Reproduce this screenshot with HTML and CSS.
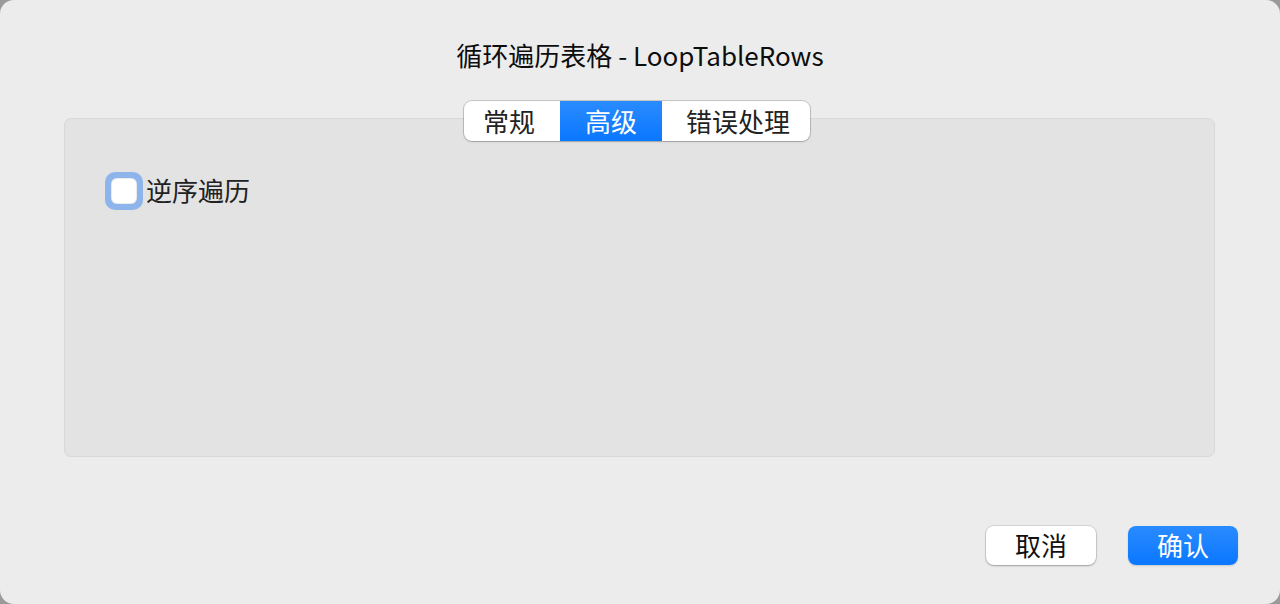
FILE: index.html
```html
<!DOCTYPE html>
<html lang="zh">
<head>
<meta charset="utf-8">
<link rel="stylesheet" href="styles.css">
</head>
<body>
<div class="window">
  <h1 class="title">循环遍历表格 - LoopTableRows</h1>
  <div class="tabs-area">
    <div class="segmented">
      <div class="seg seg-1">常规</div>
      <div class="seg seg-2 active">高级</div>
      <div class="seg seg-3">错误处理</div>
    </div>
    <div class="panel">
      <label class="check-row">
        <span class="checkbox"><span class="box"></span></span>
        <span class="check-label">逆序遍历</span>
      </label>
    </div>
  </div>
  <div class="actions">
    <button class="btn btn-cancel">取消</button>
    <button class="btn btn-ok">确认</button>
  </div>
</div>
</body>
</html>
```
FILE: styles.css
```css
html, body {
  margin: 0;
  padding: 0;
  width: 1280px;
  height: 604px;
  overflow: hidden;
  background: #9a9a9a;
}
body {
  font-family: "Noto Sans CJK SC", "Noto Sans", "Liberation Sans", sans-serif;
  color: #1d1d1d;
}
.window {
  width: 1280px;
  height: 604px;
  box-sizing: border-box;
  background: #ececec;
  border-radius: 14px;
  display: flex;
  flex-direction: column;
}
.title {
  margin: 37px 0 0 0;
  font-size: 26px;
  font-weight: 400;
  line-height: 36px;
  text-align: center;
  color: #0d0d0d;
}
.tabs-area {
  margin: 28px 65px 0 64px;
  display: flex;
  flex-direction: column;
  align-items: center;
}
.segmented {
  position: relative;
  z-index: 1;
  display: flex;
  height: 40px;
  margin-bottom: -23px;
  margin-right: 5px;
  background: #fff;
  border-radius: 8px;
  box-shadow: 0 0 0 1px rgba(0,0,0,0.16), 0 1px 2px rgba(0,0,0,0.15);
  overflow: hidden;
}
.seg {
  display: flex;
  align-items: center;
  justify-content: center;
  font-size: 26px;
  color: #222;
  line-height: 40px;
}
.seg-1 { width: 96px; padding-right: 6px; box-sizing: border-box; }
.seg-2 { width: 102px; }
.seg-3 { width: 148px; padding-left: 4px; box-sizing: border-box; }
.seg.active {
  background: linear-gradient(#2a8bff, #0a77ff);
  color: #fff;
}
.panel {
  align-self: stretch;
  height: 339px;
  box-sizing: border-box;
  background: #e3e3e3;
  border: 1px solid #d8d8d8;
  border-radius: 7px;
  padding: 53px 0 0 40px;
}
.check-row {
  display: flex;
  align-items: center;
}
.checkbox {
  width: 38px;
  height: 38px;
  box-sizing: border-box;
  border-radius: 10px;
  background: #8db5eb;
  display: flex;
  align-items: center;
  justify-content: center;
}
.box {
  width: 26px;
  height: 26px;
  border-radius: 6px;
  background: #fff;
  box-shadow: inset 0 0 0 1px rgba(0,0,0,0.08);
}
.check-label {
  font-size: 26px;
  line-height: 34px;
  color: #222;
  margin-left: 3px;
  padding-bottom: 2px;
}
.actions {
  display: flex;
  justify-content: flex-end;
  gap: 32px;
  margin: 69px 42px 0 0;
}
.btn {
  width: 110px;
  height: 39px;
  border: none;
  border-radius: 8px;
  font-family: "Noto Sans CJK SC", "Noto Sans", sans-serif;
  font-size: 26px;
  line-height: 37px;
  padding: 0 0 2px 0;
}
.btn-cancel {
  background: #fff;
  color: #111;
  box-shadow: 0 0 0 1px rgba(0,0,0,0.1), 0 1px 2px rgba(0,0,0,0.25);
}
.btn-ok {
  background: linear-gradient(#2a8bff, #0a77ff);
  color: #fff;
  box-shadow: 0 1px 2px rgba(0,0,0,0.15);
}
```
